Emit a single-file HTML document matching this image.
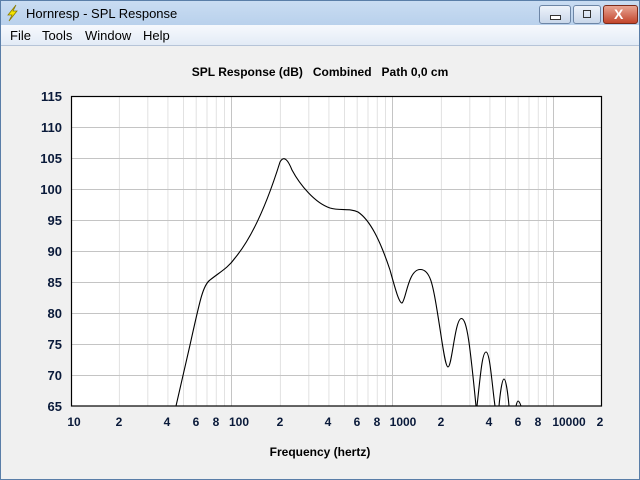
<!DOCTYPE html>
<html><head><meta charset="utf-8"><style>
body{margin:0;width:640px;height:480px;overflow:hidden;font-family:"Liberation Sans",sans-serif;}
.win{position:absolute;left:0;top:0;width:638px;height:478px;border:1px solid #5a7ea8;background:#f0f0f0;}
.title{position:absolute;left:0;top:0;width:638px;height:24px;background:linear-gradient(#c9dcf2,#b9d1ec);}
.title span{position:absolute;left:25px;top:5px;font-size:13px;color:#000;}
.menu{position:absolute;left:0;top:24px;width:638px;height:20px;background:linear-gradient(#f6f9fd,#e3ebf6);border-bottom:1px solid #b6c4d8;font-size:13px;}
.menu span{position:absolute;top:3px;}
.btn{position:absolute;top:4px;height:17px;border:1px solid #6d86a6;border-radius:3px;background:linear-gradient(#eef3fa,#c9d7ea);}
svg text{white-space:pre;}
</style></head><body>
<div class="win">
<div class="title">
<svg style="position:absolute;left:4px;top:3px" width="16" height="18"><path d="M11,1 L3,11 L7,11 L4,17 L12,7 L8,7 Z" fill="#f4e400" stroke="#8a7a00" stroke-width="0.8"/></svg>
<span>Hornresp - SPL Response</span>
<div class="btn" style="left:538px;width:30px"><div style="position:absolute;left:10px;top:9px;width:9px;height:3px;border:1px solid #333;background:#fff"></div></div>
<div class="btn" style="left:572px;width:26px"><div style="position:absolute;left:9px;top:4px;width:6px;height:6px;border:1px solid #333;"></div></div>
<div class="btn" style="left:602px;width:33px;background:linear-gradient(#e8a593,#c2452c);border-color:#7a2a1a"><div style="position:absolute;left:10px;top:0px;color:#fff;font-weight:bold;font-size:14px">X</div></div>
</div>
<div class="menu"><span style="left:9px">File</span><span style="left:41px">Tools</span><span style="left:84px">Window</span><span style="left:142px">Help</span></div>
</div>
<svg style="position:absolute;left:0;top:0" width="640" height="480" font-family="Liberation Sans,sans-serif">
<text x="320" y="76" font-size="12" font-weight="bold" text-anchor="middle" xml:space="preserve">SPL Response (dB)   Combined   Path 0,0 cm</text>
<rect x="71" y="96" width="531" height="310" fill="#fff"/>
<g stroke="#e2e2e2" stroke-width="1">
<path d="M119.4,96V406M147.8,96V406M167.9,96V406M183.5,96V406M196.2,96V406M207,96V406M216.3,96V406M224.5,96V406
M280.4,96V406M308.8,96V406M328.9,96V406M344.5,96V406M357.2,96V406M368,96V406M377.3,96V406M385.5,96V406
M441.4,96V406M469.8,96V406M489.9,96V406M505.5,96V406M518.2,96V406M529,96V406M538.3,96V406M546.5,96V406"/>
</g>
<g stroke="#c4c4c4" stroke-width="1">
<path d="M231.5,96V406M392.5,96V406M553.5,96V406M71,127.5H602M71,158.5H602M71,189.5H602M71,220.5H602M71,251.5H602M71,282.5H602M71,313.5H602M71,344.5H602M71,375.5H602"/>
</g>
<rect x="71.5" y="96.5" width="530" height="309.5" fill="none" stroke="#000" stroke-width="1.2"/>
<path fill="none" stroke="#000" stroke-width="1.1" d="M176,406 L190,345 C200,300 203,285 210,280 C220,272 228,268 235,258 C250,240 265,210 280,162 C284,155 288,160 292,170 C300,185 315,203 330,208 C340,211 350,208 358,212 C370,220 380,240 390,270 C395,288 399,303 402,303 C406,300 408,270 420,269.5 C430,269 433,285 437,310 C442,340 445,367 448,367 C452,367 455,318 461.5,318.5 C467,319 470,345 476,406 M477,406 C480,380 482,352 486,352 C490,352 492,385 495,406 M499,406 C500,395 502,379 504,379 C506,379 508,395 509,406 M516,406 C517,402 517.5,401 518,401 C519,401 520,403 521,406"/>
<g font-size="13" font-weight="bold" fill="#0a1a3a" text-anchor="end">
<text x="62" y="101">115</text><text x="62" y="132">110</text><text x="62" y="163">105</text><text x="62" y="194">100</text><text x="62" y="225">95</text><text x="62" y="256">90</text><text x="62" y="287">85</text><text x="62" y="318">80</text><text x="62" y="349">75</text><text x="62" y="380">70</text><text x="62" y="411">65</text>
</g>
<g font-size="12" font-weight="bold" fill="#0a1a3a" text-anchor="middle">
<text x="74" y="426">10</text><text x="119" y="426">2</text><text x="167" y="426">4</text><text x="196" y="426">6</text><text x="216" y="426">8</text><text x="239" y="426">100</text><text x="280" y="426">2</text><text x="328" y="426">4</text><text x="357" y="426">6</text><text x="377" y="426">8</text><text x="403" y="426">1000</text><text x="441" y="426">2</text><text x="489" y="426">4</text><text x="518" y="426">6</text><text x="538" y="426">8</text><text x="569" y="426">10000</text><text x="600" y="426">2</text>
</g>
<text x="320" y="456" font-size="12" font-weight="bold" text-anchor="middle">Frequency (hertz)</text>
</svg>
</body></html>
